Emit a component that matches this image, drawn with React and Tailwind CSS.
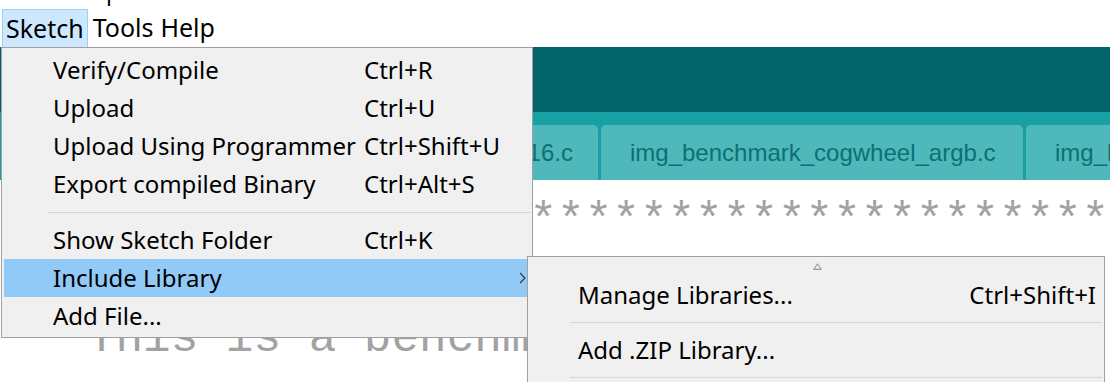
/* Arduino IDE — Sketch menu open, Include Library submenu */

const MENU_FONT = { fontFamily: '"Noto Sans", "Open Sans", sans-serif' };

const mainItems = [
  { label: "Verify/Compile", keys: "Ctrl+R" },
  { label: "Upload", keys: "Ctrl+U" },
  { label: "Upload Using Programmer", keys: "Ctrl+Shift+U" },
  { label: "Export compiled Binary", keys: "Ctrl+Alt+S" },
  { sep: true },
  { label: "Show Sketch Folder", keys: "Ctrl+K" },
  { label: "Include Library", sub: true, active: true },
  { label: "Add File..." },
];

const Chevron = () => (
  <svg width="7" height="12" viewBox="0 0 7 12" fill="none" aria-hidden="true">
    <path d="M1 1l5 5-5 5" stroke="#333" strokeWidth="1.1" />
  </svg>
);

const MenuRow = ({ label, keys, sub, active }) => (
  <div
    className={`relative mx-[2px] h-[38px] flex items-center ${active ? "bg-[#91c9f7]" : ""}`}
  >
    <span className="w-[311px] pl-[49px] shrink-0 box-content whitespace-nowrap">{label}</span>
    {keys && <span className="whitespace-nowrap">{keys}</span>}
    {sub && (
      <span className="absolute right-[4px] top-[13px]">
        <Chevron />
      </span>
    )}
  </div>
);

const Tab = ({ name, w }) => (
  <div
    className={`${w} h-[55px] shrink-0 rounded-t-[5px] bg-[#4fb8bb] flex items-center pl-[29px] text-[24px] text-[#0c7074]`}
    style={{ fontFamily: '"Liberation Sans", Arial, sans-serif' }}
  >
    <span className="whitespace-nowrap">{name}</span>
  </div>
);

export default function App() {
  return (
    <div className="relative w-[1110px] h-[382px] overflow-hidden bg-white text-black" style={MENU_FONT}>
      {/* clipped line above the menu bar */}
      <div className="h-[9px] overflow-hidden">
        <div className="-mt-[24px] pl-[106px] text-[23px] leading-[30px]">p</div>
      </div>

      {/* menu bar */}
      <div className="h-[38px] flex items-stretch text-[25px] pl-[2px]">
        <div className="px-[3px] flex items-center bg-[#cce8ff] border border-[#99d1ff] border-b-0">Sketch</div>
        <div className="px-[5px] flex items-center">Tools</div>
        <div className="px-[2px] flex items-center">Help</div>
      </div>

      {/* editor behind the menus */}
      <div className="h-[65px] bg-[#006468]" />
      <div className="bg-[#17a1a5] pt-[13px] flex gap-[3px] pl-[141px]">
        <Tab name="img_benchmark_cogwheel_alpha16.c" w="w-[457px]" />
        <Tab name="img_benchmark_cogwheel_argb.c" w="w-[422px]" />
        <Tab name="img_benchmark_cogwheel_chroma_keyed.c" w="w-[500px]" />
      </div>
      <div
        className="pl-[5px] pt-[12px] text-[46px] leading-[61px] text-[#a2a2a2] whitespace-pre"
        style={{ fontFamily: '"Liberation Mono", "Courier New", monospace' }}
      >
        <div>{"/****************************************"}</div>
        <div>{" *"}</div>
        <div className="-mt-[5px]">{" * This is a benchmark"}</div>
      </div>

      {/* Sketch dropdown */}
      <div className="absolute left-[1px] top-[47px] w-[532px] h-[291px] bg-[#f0f0f0] border border-[#a0a0a0] pt-[3px] text-[24px]">
        {mainItems.map((it, i) =>
          it.sep ? (
            <div key={i} className="h-[18px] flex items-center pl-[45px] pr-[1px]">
              <div className="h-px w-full bg-[#d7d7d7]" />
            </div>
          ) : (
            <MenuRow key={i} {...it} />
          )
        )}
      </div>

      {/* Include Library submenu */}
      <div className="absolute left-[527px] top-[256px] w-[578px] h-[140px] bg-[#f0f0f0] border border-[#a0a0a0] text-[24px]">
        <div className="h-[19px] flex items-center justify-center pl-[2px]">
          <svg width="9" height="7" viewBox="0 0 9 7" aria-hidden="true">
            <path d="M4.5 0.8L8.2 6.3H0.8Z" fill="none" stroke="#7a7a7a" strokeWidth="0.9" />
          </svg>
        </div>
        <div className="h-[38px] flex items-center pl-[50px] pr-[8px]">
          <span className="whitespace-nowrap">Manage Libraries...</span>
          <span className="ml-auto whitespace-nowrap">Ctrl+Shift+I</span>
        </div>
        <div className="h-[17px] flex items-center pl-[42px] pr-[2px]">
          <div className="h-px w-full bg-[#d7d7d7]" />
        </div>
        <div className="h-[38px] flex items-center pl-[50px]">Add .ZIP Library...</div>
        <div className="h-[17px] flex items-center pl-[42px] pr-[2px]">
          <div className="h-px w-full bg-[#d7d7d7]" />
        </div>
      </div>
    </div>
  );
}
